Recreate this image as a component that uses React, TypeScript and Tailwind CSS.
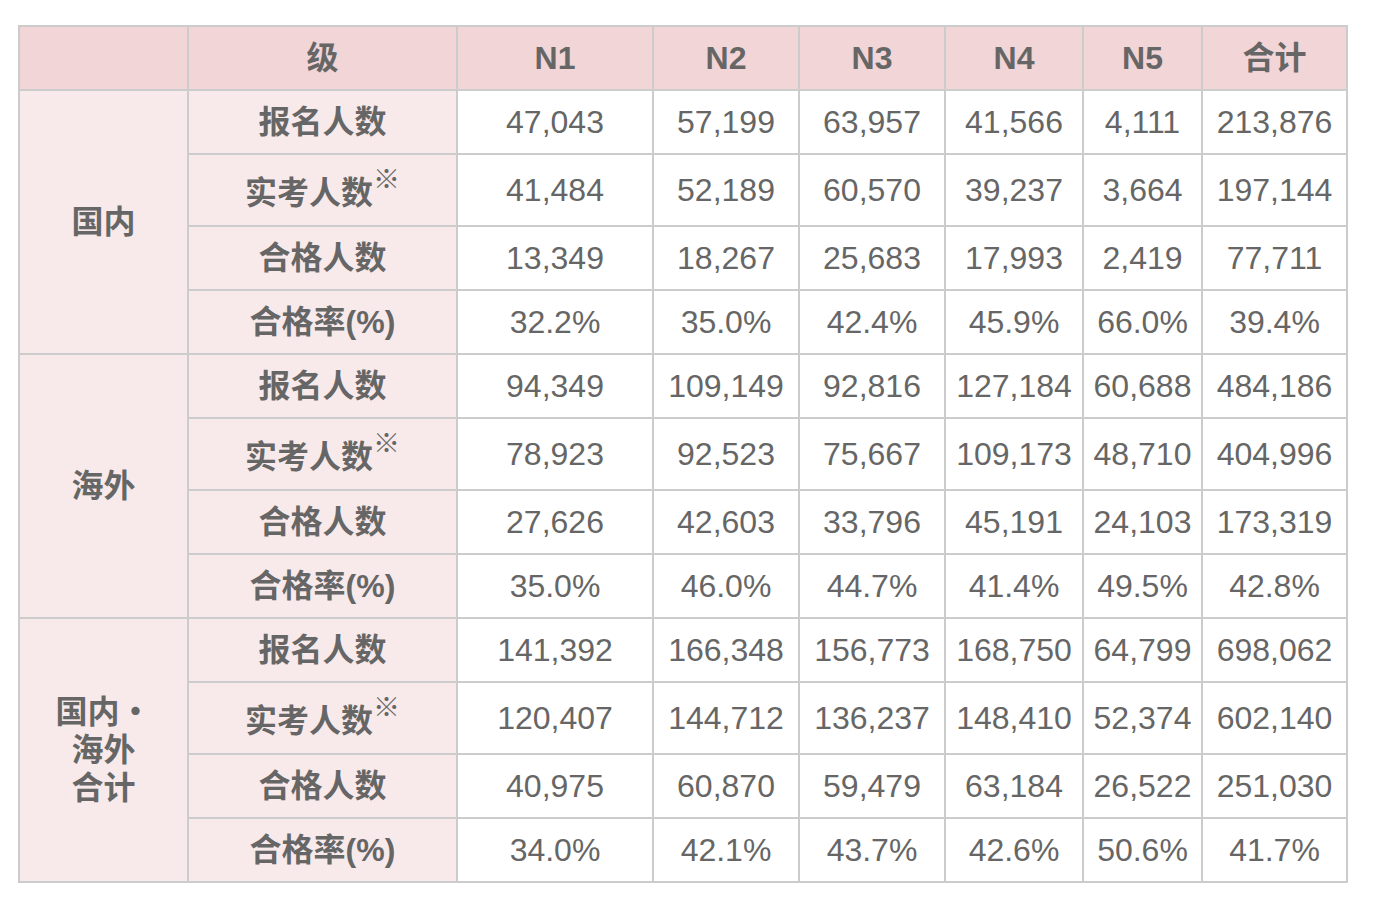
const levels = ['N1', 'N2', 'N3', 'N4', 'N5', '合计'];

type Group = {
  name: string[];
  rows: { label: string; note?: boolean; values: string[] }[];
};

const groups: Group[] = [
  {
    name: ['国内'],
    rows: [
      { label: '报名人数', values: ['47,043', '57,199', '63,957', '41,566', '4,111', '213,876'] },
      { label: '实考人数', note: true, values: ['41,484', '52,189', '60,570', '39,237', '3,664', '197,144'] },
      { label: '合格人数', values: ['13,349', '18,267', '25,683', '17,993', '2,419', '77,711'] },
      { label: '合格率(%)', values: ['32.2%', '35.0%', '42.4%', '45.9%', '66.0%', '39.4%'] },
    ],
  },
  {
    name: ['海外'],
    rows: [
      { label: '报名人数', values: ['94,349', '109,149', '92,816', '127,184', '60,688', '484,186'] },
      { label: '实考人数', note: true, values: ['78,923', '92,523', '75,667', '109,173', '48,710', '404,996'] },
      { label: '合格人数', values: ['27,626', '42,603', '33,796', '45,191', '24,103', '173,319'] },
      { label: '合格率(%)', values: ['35.0%', '46.0%', '44.7%', '41.4%', '49.5%', '42.8%'] },
    ],
  },
  {
    name: ['国内・', '海外', '合计'],
    rows: [
      { label: '报名人数', values: ['141,392', '166,348', '156,773', '168,750', '64,799', '698,062'] },
      { label: '实考人数', note: true, values: ['120,407', '144,712', '136,237', '148,410', '52,374', '602,140'] },
      { label: '合格人数', values: ['40,975', '60,870', '59,479', '63,184', '26,522', '251,030'] },
      { label: '合格率(%)', values: ['34.0%', '42.1%', '43.7%', '42.6%', '50.6%', '41.7%'] },
    ],
  },
];

const cell = 'border-2 border-[#cccccc] text-center align-middle p-0';

export default function App() {
  return (
    <div
      className="bg-white min-h-[918px] pt-[25px] pl-[18px] text-[#666666]"
      style={{ fontFamily: '"Liberation Sans", "Noto Sans CJK SC", sans-serif' }}
    >
      <table className="border-collapse table-fixed w-[1329px] text-[32px] leading-[38px]">
        <colgroup>
          <col className="w-[169px]" />
          <col className="w-[269px]" />
          <col className="w-[196px]" />
          <col className="w-[146px]" />
          <col className="w-[146px]" />
          <col className="w-[138px]" />
          <col className="w-[119px]" />
          <col className="w-[145px]" />
        </colgroup>
        <thead>
          <tr className="h-[64px] bg-[#f2d5d6]">
            <th className={cell}></th>
            <th className={`${cell} font-bold`}>级</th>
            {levels.map((lv) => (
              <th key={lv} className={`${cell} font-bold`}>
                {lv}
              </th>
            ))}
          </tr>
        </thead>
        <tbody>
          {groups.map((g) =>
            g.rows.map((r, i) => (
              <tr key={g.name.join('') + r.label} className={r.note ? 'h-[72px]' : 'h-[64px]'}>
                {i === 0 && (
                  <td rowSpan={4} className={`${cell} bg-[#f8eaea] font-bold px-[20px]`}>
                    {g.name.map((n) => (
                      <div key={n}>{n}</div>
                    ))}
                  </td>
                )}
                <td className={`${cell} bg-[#f8eaea] font-bold`}>
                  <span className={r.note ? 'relative top-[3px]' : ''}>{r.label}</span>
                  {r.note && (
                    <span className="relative -top-[12px] text-[27px] font-normal leading-none">※</span>
                  )}
                </td>
                {r.values.map((v, j) => (
                  <td key={j} className={cell}>
                    {v}
                  </td>
                ))}
              </tr>
            ))
          )}
        </tbody>
      </table>
    </div>
  );
}
